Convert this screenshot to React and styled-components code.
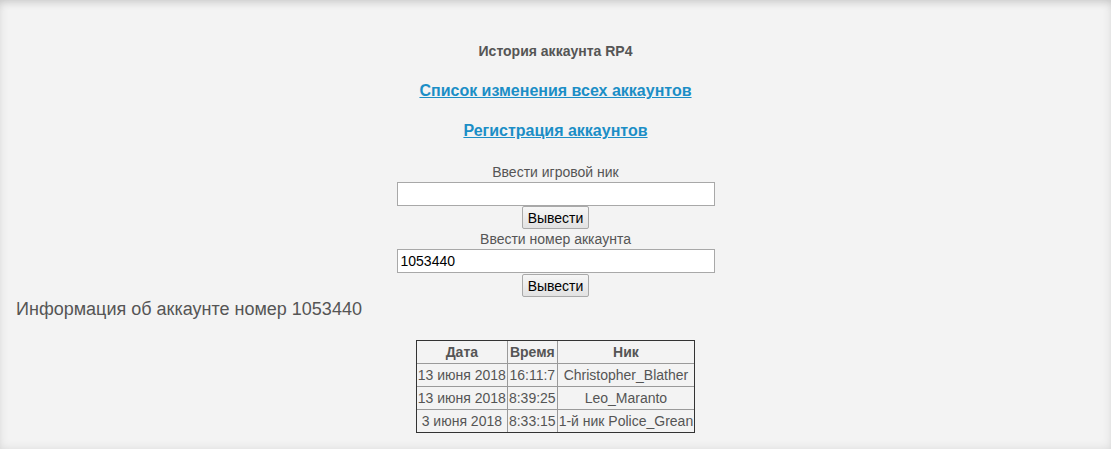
import React from 'react';
import styled, { createGlobalStyle } from 'styled-components';

const GlobalStyle = createGlobalStyle`
	html, body {
		margin: 0;
		padding: 0;
		background: #f3f3f3;
	}
	* {
		box-sizing: border-box;
	}
`;

const Page = styled.div`
	min-height: 100vh;
	padding-top: 43px;
	background: #f3f3f3;
	box-shadow: inset 0 0 10px rgba(0, 0, 0, 0.1), inset 0 8px 10px -6px rgba(0, 0, 0, 0.12);
	font-family: 'Liberation Sans', Arial, sans-serif;
	color: #555;
	display: flex;
	flex-direction: column;
`;

const Title = styled.div`
	text-align: center;
	font-size: 14px;
	font-weight: bold;
	line-height: 16px;
`;

const NavLink = styled.a`
	display: block;
	align-self: center;
	margin-top: ${p => p.$gap}px;
	font-size: 16px;
	font-weight: bold;
	line-height: 19px;
	color: #1b8ec6;
	text-decoration: underline;
`;

const Form = styled.div`
	margin-top: 22px;
	display: flex;
	flex-direction: column;
	align-items: center;
`;

const Label = styled.div`
	font-size: 14px;
	line-height: 20px;
	color: #555;
`;

const Input = styled.input`
	width: 318px;
	height: 24px;
	border: 1px solid #a8a8a8;
	background: #fff;
	padding: 0 3px;
	font-family: 'Liberation Sans', Arial, sans-serif;
	font-size: 14px;
	color: #000;
	outline: none;
`;

const Button = styled.button`
	margin-top: ${p => p.$top || 0}px;
	height: 23px;
	padding: 0 5px;
	border: 1px solid #a9a9a9;
	border-radius: 2px;
	background: linear-gradient(#f6f6f6, #e2e2e2);
	font-family: 'Liberation Sans', Arial, sans-serif;
	font-size: 14px;
	color: #000;
`;

const Info = styled.div`
	margin-top: 1px;
	padding-left: 16px;
	font-size: 18px;
	line-height: 22px;
	color: #555;
`;

const Table = styled.table`
	margin: 20px auto 0;
	border-collapse: collapse;
	outline: 1px solid #333;
	outline-offset: -1px;
	font-size: 14px;
	color: #555;
`;

const Cell = styled.td`
	border: 1px solid #9a9a9a;
	padding: 3px 1px;
	line-height: 16px;
	text-align: center;
	white-space: nowrap;
	font-weight: ${p => (p.$head ? 'bold' : 'normal')};
`;

const rows = [
	['13 июня 2018', '16:11:7', 'Christopher_Blather'],
	['13 июня 2018', '8:39:25', 'Leo_Maranto'],
	['3 июня 2018', '8:33:15', '1-й ник Police_Grean'],
];

const App = () => {
	return (
		<Page>
			<GlobalStyle />
			<Title>История аккаунта RP4</Title>
			<NavLink href="#" $gap={22}>Список изменения всех аккаунтов</NavLink>
			<NavLink href="#" $gap={21}>Регистрация аккаунтов</NavLink>
			<Form>
				<Label>Ввести игровой ник</Label>
				<Input type="text" defaultValue="" />
				<Button>Вывести</Button>
				<Label>Ввести номер аккаунта</Label>
				<Input type="text" defaultValue="1053440" />
				<Button $top={1}>Вывести</Button>
			</Form>
			<Info>Информация об аккаунте номер 1053440</Info>
			<Table>
				<tbody>
					<tr>
						<Cell $head>Дата</Cell>
						<Cell $head>Время</Cell>
						<Cell $head>Ник</Cell>
					</tr>
					{rows.map((r, i) => (
						<tr key={i}>
							{r.map((c, j) => (
								<Cell key={j}>{c}</Cell>
							))}
						</tr>
					))}
				</tbody>
			</Table>
		</Page>
	);
};

export default App;
